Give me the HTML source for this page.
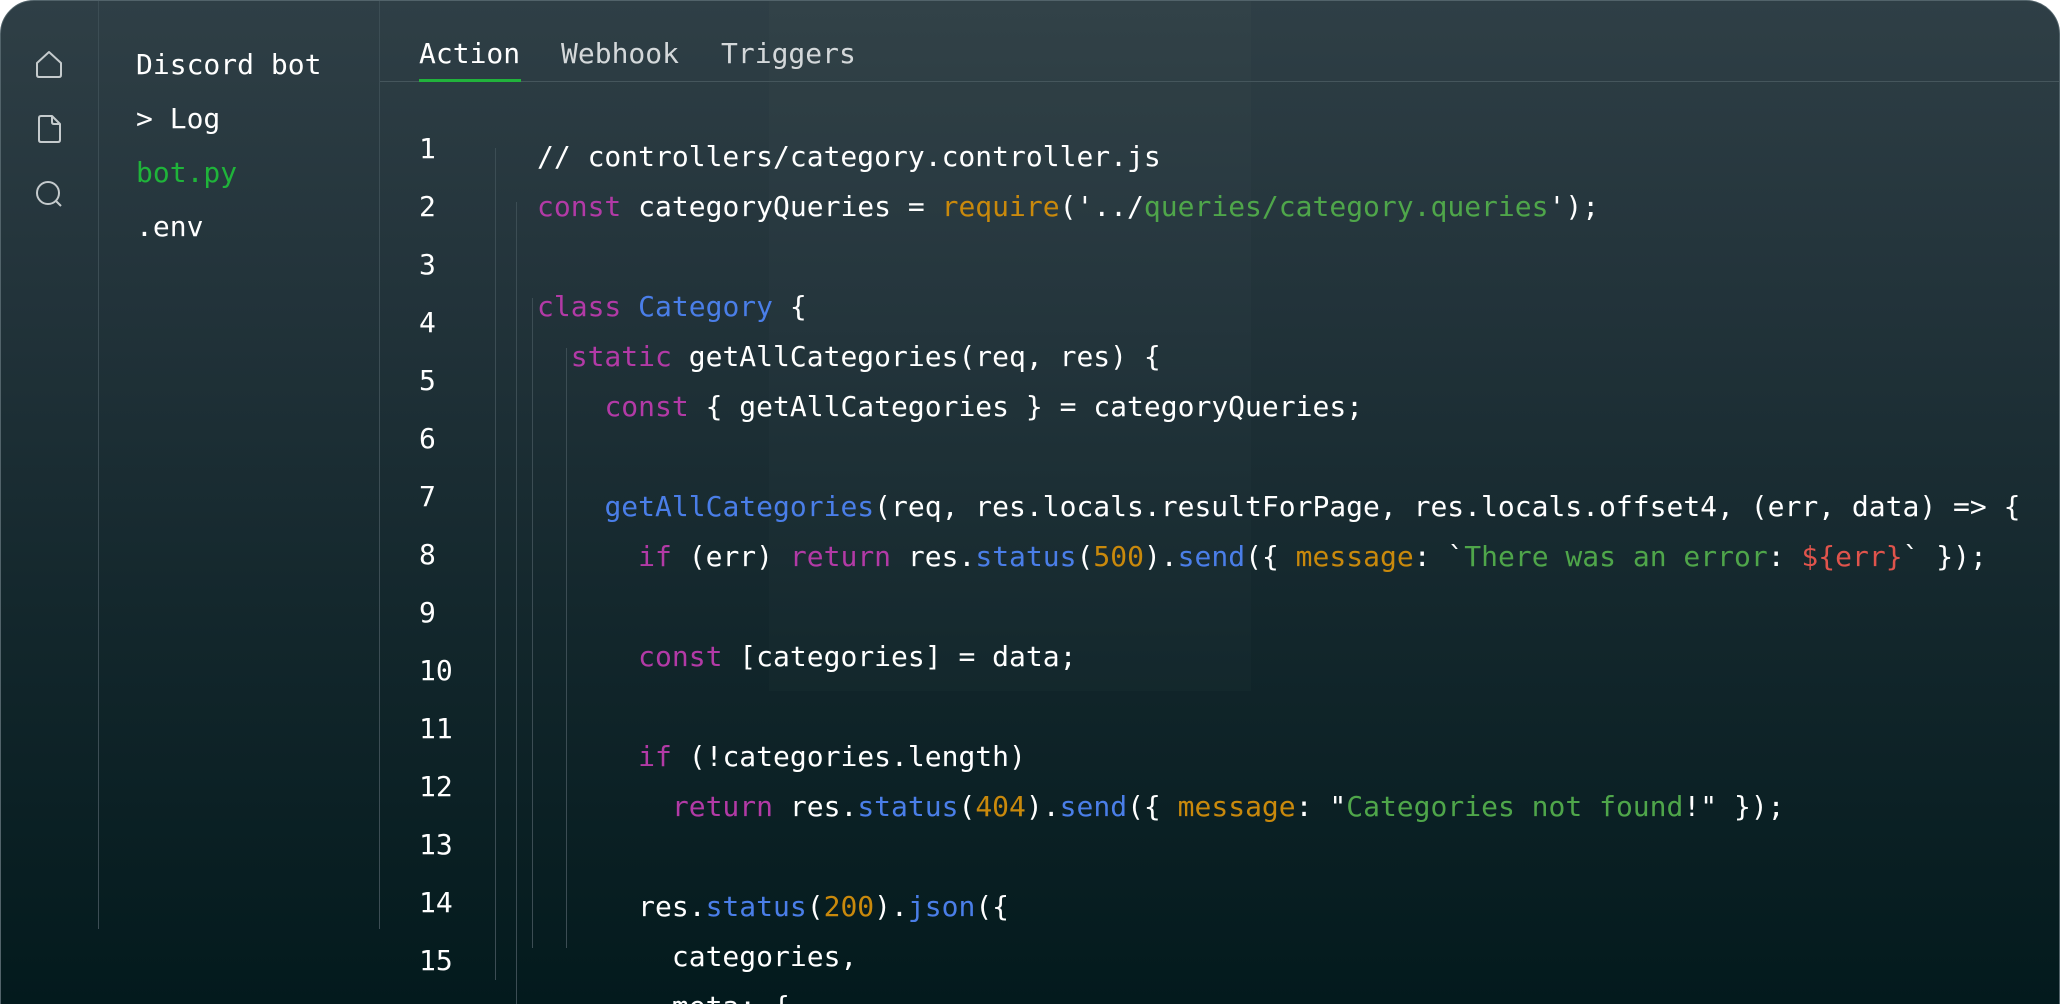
<!DOCTYPE html>
<html><head><meta charset="utf-8"><style>
html,body{margin:0;padding:0;background:#fff;width:2060px;height:1004px;overflow:hidden;}
body{font-family:"DejaVu Sans Mono","Liberation Mono",monospace;}
.wrap{position:relative;width:2060px;height:1004px;overflow:hidden;}
.win{position:absolute;left:0;top:0;width:2058px;height:1020px;border:1px solid #52636a;border-radius:34px 34px 0 0;background:linear-gradient(180deg,#2f3f46 0%,#22333a 29%,#12262b 63%,#031a1d 98%);overflow:hidden;}
.v{position:absolute;width:1px;background:#3c4d54;}
.t{position:absolute;font-size:28px;line-height:34px;color:#fff;white-space:pre;}
.code{position:absolute;left:536px;top:131px;font-size:28px;line-height:50px;color:#fff;white-space:pre;}
.ln{position:absolute;left:418px;top:119px;font-size:28px;line-height:58px;color:#fff;white-space:pre;}
.k{color:#b23aa6}.b{color:#4a7ee8}.o{color:#c9890c}.g{color:#4fa64a}.r{color:#e0544c}
</style></head><body>
<div class="wrap">
<div class="win">
<div style="position:absolute;left:768px;top:0;width:482px;height:690px;background:rgba(255,255,255,0.015)"></div>
<div class="v" style="left:97px;top:0;height:928px"></div>
<div class="v" style="left:378px;top:0;height:928px"></div>
<div style="position:absolute;left:379px;top:80px;right:0;height:1px;background:#45565c"></div>
<div style="position:absolute;left:418px;top:78px;width:102px;height:3px;background:#21b33c"></div>
<svg style="position:absolute;left:0;top:0" width="100" height="230" fill="none" stroke="#c5cbcd" stroke-width="2" stroke-linejoin="round">
<path d="M36 62 L48 51 L60 62 V74 Q60 76 58 76 H38 Q36 76 36 74 Z"/>
<path d="M40 115 H51 L59 123 V139 Q59 141 57 141 H40 Q38 141 38 139 V117 Q38 115 40 115 Z M51 115 V121 Q51 123 53 123 H59"/>
<circle cx="47" cy="192" r="11"/><path d="M55 200 L60 205"/>
</svg>
<div class="t" style="left:135px;top:47px">Discord bot</div>
<div class="t" style="left:135px;top:101px">&gt; Log</div>
<div class="t" style="left:135px;top:155px;color:#1fb43a">bot.py</div>
<div class="t" style="left:135px;top:209px">.env</div>
<div class="t" style="left:418px;top:36px">Action</div>
<div class="t" style="left:560px;top:36px;color:#d4d8da">Webhook</div>
<div class="t" style="left:720px;top:36px;color:#d4d8da">Triggers</div>
<div class="v" style="left:494px;top:147px;height:832px"></div>
<div class="v" style="left:515px;top:201px;height:820px"></div>
<div class="v" style="left:531px;top:297px;height:650px"></div>
<div class="v" style="left:565px;top:347px;height:600px"></div>
<div class="ln">1
2
3
4
5
6
7
8
9
10
11
12
13
14
15</div>
<div class="code">// controllers/category.controller.js
<span class="k">const</span> categoryQueries = <span class="o">require</span>('../<span class="g">queries/category.queries</span>');

<span class="k">class</span> <span class="b">Category</span> {
  <span class="k">static</span> getAllCategories(req, res) {
    <span class="k">const</span> { getAllCategories } = categoryQueries;

    <span class="b">getAllCategories</span>(req, res.locals.resultForPage, res.locals.offset4, (err, data) =&gt; {
      <span class="k">if</span> (err) <span class="k">return</span> res.<span class="b">status</span>(<span class="o">500</span>).<span class="b">send</span>({ <span class="o">message</span>: `<span class="g">There was an error</span>: <span class="r">${err}</span>` });

      <span class="k">const</span> [categories] = data;

      <span class="k">if</span> (!categories.length)
        <span class="k">return</span> res.<span class="b">status</span>(<span class="o">404</span>).<span class="b">send</span>({ <span class="o">message</span>: "<span class="g">Categories not found</span>!" });

      res.<span class="b">status</span>(<span class="o">200</span>).<span class="b">json</span>({
        categories,
        meta: {</div>
</div>
</div>
</body></html>
